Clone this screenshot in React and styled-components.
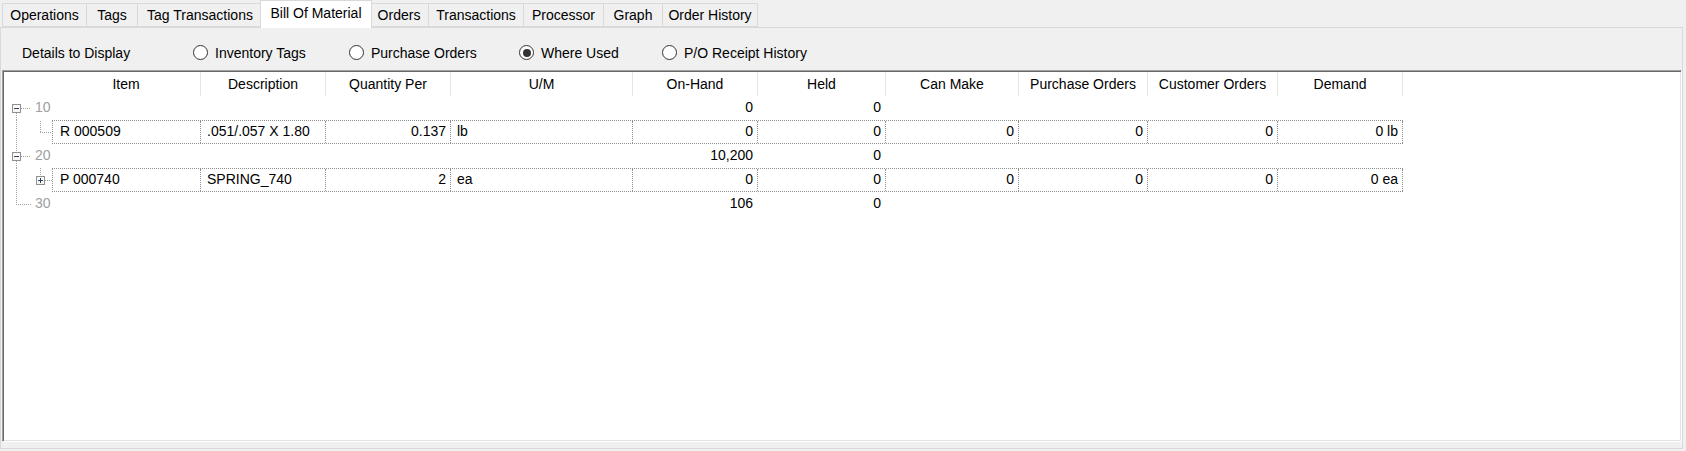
import React from 'react';
import styled, { createGlobalStyle } from 'styled-components';

const GlobalStyle = createGlobalStyle`
  html, body { margin: 0; padding: 0; background: #f0f0f0; }
  body { font-family: "Liberation Sans", Arial, sans-serif; font-size: 14px; color: #000; }
  #root { width: 1686px; height: 451px; overflow: hidden; }
  * { box-sizing: border-box; }
`;

const Window = styled.div`
  width: 1686px;
  height: 451px;
  background: #f0f0f0;
  display: flex;
  flex-direction: column;
`;

const TabStrip = styled.div`
  display: flex;
  align-items: flex-end;
  height: 27px;
  padding-left: 2px;
  position: relative;
  z-index: 2;
`;

const Tab = styled.div`
  width: ${p => p.$width}px;
  height: ${p => (p.$active ? 28 : 24)}px;
  margin-left: ${p => (p.$active ? -2 : 0)}px;
  margin-right: ${p => (p.$active ? -3 : -1)}px;
  margin-bottom: ${p => (p.$active ? -1 : 0)}px;
  border: 1px solid #d9d9d9;
  border-bottom: ${p => (p.$active ? 'none' : '1px solid #d9d9d9')};
  background: ${p => (p.$active ? '#ffffff' : '#f0f0f0')};
  position: relative;
  z-index: ${p => (p.$active ? 2 : 1)};
  text-align: center;
  line-height: ${p => (p.$active ? 24 : 22)}px;
  white-space: nowrap;
  color: #000;
`;

const Panel = styled.div`
  width: 1683px;
  height: 422px;
  border: 1px solid #d9d9d9;
  background: #f0f0f0;
  display: flex;
  flex-direction: column;
  position: relative;
  z-index: 1;
`;

const OptionsRow = styled.div`
  height: 42px;
  padding: 7px 0 0 21px;
  display: flex;
  align-items: center;
`;

const OptionsLabel = styled.div`
  width: 171px;
  white-space: nowrap;
`;

const RadioOption = styled.label`
  width: ${p => p.$width}px;
  display: flex;
  align-items: center;
  gap: 7px;
  white-space: nowrap;
`;

const RadioCircle = styled.span`
  width: 15px;
  height: 15px;
  border-radius: 50%;
  border: 1px solid #333333;
  background: #ffffff;
  display: flex;
  align-items: center;
  justify-content: center;
  flex: none;
  &::after {
    content: '';
    width: 8px;
    height: 8px;
    border-radius: 50%;
    background: ${p => (p.$checked ? '#333333' : 'transparent')};
  }
`;

const Grid = styled.div`
  margin-left: 1px;
  width: 1680px;
  height: 372px;
  background: #ffffff;
  border: 1px solid;
  border-color: #a0a0a0 #ffffff #ffffff #a0a0a0;
  box-shadow: inset 1px 1px 0 #696969, inset -1px -1px 0 #e3e3e3;
  padding: 1px;
  display: flex;
  flex-direction: column;
`;

const HeaderRow = styled.div`
  display: flex;
  height: 24px;
  flex: none;
`;

const HeaderCell = styled.div`
  width: ${p => p.$width}px;
  padding-left: ${p => p.$indent || 0}px;
  border-right: 1px solid #e5e5e5;
  text-align: center;
  line-height: 24px;
  white-space: nowrap;
  color: #000;
`;

const Row = styled.div`
  display: flex;
  height: 24px;
  flex: none;
`;

const Gutter = styled.svg`
  display: block;
  flex: none;
`;

const GroupLabel = styled.div`
  width: ${p => p.$width}px;
  line-height: 23px;
  color: #a0a0a0;
  white-space: nowrap;
`;

const CellBox = styled.div`
  display: flex;
  height: 24px;
  border-top: 1px dotted #8f8f8f;
  border-bottom: 1px dotted #8f8f8f;
  border-left: 1px dotted #8f8f8f;
`;

const Cell = styled.div`
  width: ${p => p.$width}px;
  border-right: 1px ${p => (p.$boxed ? 'dotted #8f8f8f' : 'solid transparent')};
  text-align: ${p => p.$align};
  padding: ${p => (p.$align === 'right' ? '0 4px 0 0' : `0 0 0 ${p.$pad || 6}px`)};
  line-height: ${p => (p.$boxed ? 21 : 23)}px;
  white-space: nowrap;
  overflow: hidden;
  color: #000;
`;

const tabs = [
  { label: 'Operations', width: 85 },
  { label: 'Tags', width: 52 },
  { label: 'Tag Transactions', width: 126 },
  { label: 'Bill Of Material', width: 112, active: true },
  { label: 'Orders', width: 60 },
  { label: 'Transactions', width: 96 },
  { label: 'Processor', width: 81 },
  { label: 'Graph', width: 60 },
  { label: 'Order History', width: 96 },
];

const options = [
  { label: 'Inventory Tags', width: 156 },
  { label: 'Purchase Orders', width: 170 },
  { label: 'Where Used', width: 143, checked: true },
  { label: 'P/O Receipt History', width: 200 },
];

const columns = [
  { key: 'item', title: 'Item', width: 197, align: 'left' },
  { key: 'desc', title: 'Description', width: 125, align: 'left' },
  { key: 'qty', title: 'Quantity Per', width: 125, align: 'right' },
  { key: 'um', title: 'U/M', width: 182, align: 'left' },
  { key: 'onHand', title: 'On-Hand', width: 125, align: 'right' },
  { key: 'held', title: 'Held', width: 128, align: 'right' },
  { key: 'canMake', title: 'Can Make', width: 133, align: 'right' },
  { key: 'po', title: 'Purchase Orders', width: 129, align: 'right' },
  { key: 'co', title: 'Customer Orders', width: 130, align: 'right' },
  { key: 'demand', title: 'Demand', width: 125, align: 'right' },
];

const rows = [
  { type: 'group', label: '10', expander: 'minus', first: true, last: false, onHand: '0', held: '0' },
  {
    type: 'item', item: 'R 000509', desc: '.051/.057 X 1.80', qty: '0.137', um: 'lb',
    onHand: '0', held: '0', canMake: '0', po: '0', co: '0', demand: '0 lb', expander: null,
  },
  { type: 'group', label: '20', expander: 'minus', first: false, last: false, onHand: '10,200', held: '0' },
  {
    type: 'item', item: 'P 000740', desc: 'SPRING_740', qty: '2', um: 'ea',
    onHand: '0', held: '0', canMake: '0', po: '0', co: '0', demand: '0 ea', expander: 'plus',
  },
  { type: 'group', label: '30', expander: null, first: false, last: true, onHand: '106', held: '0' },
];

const LINE = '#a0a0a0';

function Dots({ x1, y1, x2, y2 }) {
  return (
    <line
      x1={x1} y1={y1} x2={x2} y2={y2}
      stroke={LINE} strokeWidth="1" strokeDasharray="1 1" shapeRendering="crispEdges"
    />
  );
}

function Expander({ cx, kind }) {
  const x = cx - 4;
  return (
    <g shapeRendering="crispEdges">
      <rect x={x + 0.5} y={8.5} width="8" height="8" fill="#f6f6f6" stroke="#919191" />
      <rect x={x + 1.5} y={9.5} width="6" height="3" fill="#ffffff" stroke="none" />
      <line x1={x + 2} y1={12.5} x2={x + 7} y2={12.5} stroke="#2c3e66" />
      {kind === 'plus' && <line x1={cx + 0.5} y1={10} x2={cx + 0.5} y2={15} stroke="#2c3e66" />}
    </g>
  );
}

function GroupGutter({ row }) {
  const cx = 12.5;
  return (
    <Gutter width="31" height="24" viewBox="0 0 31 24">
      {row.expander ? (
        <>
          {!row.first && <Dots x1={cx} y1={0} x2={cx} y2={8} />}
          {!row.last && <Dots x1={cx} y1={17} x2={cx} y2={24} />}
          <Dots x1={17} y1={12.5} x2={27} y2={12.5} />
          <Expander cx={12} kind={row.expander} />
        </>
      ) : (
        <>
          <Dots x1={cx} y1={0} x2={cx} y2={row.last ? 13 : 24} />
          <Dots x1={12} y1={12.5} x2={27} y2={12.5} />
        </>
      )}
    </Gutter>
  );
}

function ItemGutter({ row }) {
  const cx = 36.5;
  return (
    <Gutter width="48" height="24" viewBox="0 0 48 24">
      <Dots x1={12.5} y1={0} x2={12.5} y2={24} />
      {row.expander ? (
        <>
          <Dots x1={cx} y1={0} x2={cx} y2={8} />
          <Dots x1={41} y1={12.5} x2={48} y2={12.5} />
          <Expander cx={36} kind={row.expander} />
        </>
      ) : (
        <>
          <Dots x1={cx} y1={1} x2={cx} y2={13} />
          <Dots x1={36} y1={12.5} x2={48} y2={12.5} />
        </>
      )}
    </Gutter>
  );
}

function GroupRow({ row }) {
  return (
    <Row>
      <GroupGutter row={row} />
      <GroupLabel $width={columns[0].width - 31}>{row.label}</GroupLabel>
      {columns.slice(1).map(c => (
        <Cell key={c.key} $width={c.width} $align={c.align}>{row[c.key] || ''}</Cell>
      ))}
    </Row>
  );
}

function ItemRow({ row }) {
  return (
    <Row>
      <ItemGutter row={row} />
      <CellBox>
        {columns.map((c, i) => (
          <Cell
            key={c.key}
            $boxed
            $width={i === 0 ? c.width - 49 : c.width}
            $align={c.align}
            $pad={i === 0 ? 7 : 6}
          >
            {row[c.key]}
          </Cell>
        ))}
      </CellBox>
    </Row>
  );
}

export default function App() {
  return (
    <>
      <GlobalStyle />
      <Window>
        <TabStrip>
          {tabs.map(t => (
            <Tab key={t.label} $width={t.width} $active={t.active}>{t.label}</Tab>
          ))}
        </TabStrip>
        <Panel>
          <OptionsRow>
            <OptionsLabel>Details to Display</OptionsLabel>
            {options.map(o => (
              <RadioOption key={o.label} $width={o.width}>
                <RadioCircle $checked={o.checked} />
                {o.label}
              </RadioOption>
            ))}
          </OptionsRow>
          <Grid>
            <HeaderRow>
              {columns.map((c, i) => (
                <HeaderCell key={c.key} $width={c.width} $indent={i === 0 ? 48 : 0}>{c.title}</HeaderCell>
              ))}
            </HeaderRow>
            {rows.map((r, i) =>
              r.type === 'group' ? <GroupRow key={i} row={r} /> : <ItemRow key={i} row={r} />
            )}
          </Grid>
        </Panel>
      </Window>
    </>
  );
}
